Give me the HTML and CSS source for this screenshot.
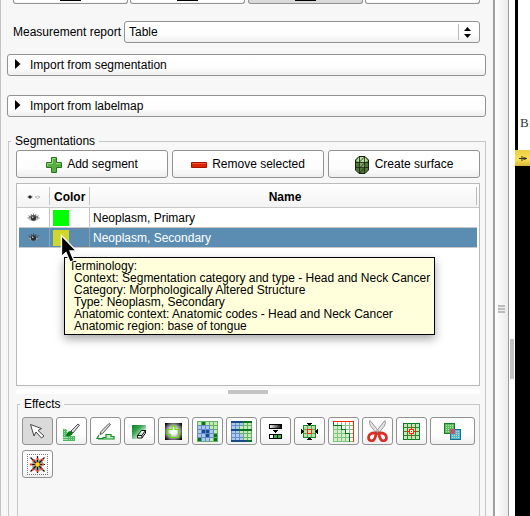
FILE: index.html
```html
<!DOCTYPE html>
<html lang="en">
<head>
<meta charset="utf-8">
<title>Segment editor</title>
<link rel="stylesheet" href="styles.css">
</head>
<body>
<div class="app">
  <main class="panel">
    <div class="modes">
      <div class="btn mode"><i></i></div><div class="btn mode"><i></i></div><div class="btn mode active"><i></i></div><div class="btn mode"></div>
    </div>
    <div class="report">
      <label>Measurement report</label>
      <div class="btn combo"><span>Table</span><i class="divider"></i>
        <svg width="7" height="11" viewBox="0 0 7 11"><path d="M0 4L3.5 0 7 4zM0 7h7L3.5 11z"/></svg>
      </div>
    </div>
    <div class="btn fold"><svg width="6" height="10"><path d="M0 0L5.5 5 0 10z"/></svg><span>Import from segmentation</span></div>
    <div class="btn fold second"><svg width="6" height="10"><path d="M0 0L5.5 5 0 10z"/></svg><span>Import from labelmap</span></div>

    <fieldset class="group">
      <legend>Segmentations</legend>
      <div class="actions">
        <button class="btn"><svg width="16" height="16" viewBox="0 0 16 16"><path d="M5.5.5h5v5h5v5h-5v5h-5v-5h-5v-5h5z" fill="#59ad42" stroke="#28751f"/><path d="M6.5 6V1.5h3M1.500 9V6.500h5M10 6.500h4.500" fill="none" stroke="#98d982"/></svg><span>Add segment</span></button>
        <button class="btn"><svg width="16" height="16" viewBox="0 0 16 16"><path d="M.5 5.500h15v5H.5z" fill="#dc2506" stroke="#a51400"/><path d="M1 6.500h14" stroke="#f15436"/></svg><span>Remove selected</span></button>
        <button class="btn surface"><svg width="14" height="18" viewBox="0 0 14 18"><path d="M4 .5h6L13.500 4v10L10 17.500H4L.5 14V4z" fill="#527638"/><path d="M4 1h6l3 4-3 1H4L1 5z" fill="#b6dda1"/><path d="M4 6h6v6H4z" fill="#82a56a"/><path d="M4 .5h6L13.500 4v10L10 17.500H4L.5 14V4z" fill="none" stroke="#182312"/><path d="M4.500 1v16M9.500 1v16M1 6.500h12M1 11.500h12M4.500 6l5-5M4.500 12l5-5M4.500 17l5-5" fill="none" stroke="#182312" stroke-width=".8"/></svg><span>Create surface</span></button>
      </div>
      <div class="table">
        <div class="row head">
          <div><svg width="14" height="6" viewBox="0 0 14 6"><path d="M0 3Q3-.5 6 3 3 5.500 0 3" fill="#999"/><circle cx="3" cy="3" r="1.500" fill="#222"/><path d="M8 3q2.500-2 5 0Q10.500 6 8 3" fill="#fff" stroke="#bbb"/></svg></div>
          <div>Color</div><div>Name</div>
        </div>
        <div class="row">
          <div><svg width="13" height="10" viewBox="0 0 13 10"><path d="M.5 5Q6.500-.5 12.500 5 6.500 10.500.5 5z" fill="#ccc" stroke="#999" stroke-width=".7"/><circle cx="6.500" cy="5" r="2.700" fill="#333"/><path d="M1.500 2.500l2 1.500M4 1l.8 2M6.500.5V3M9 1l-.8 2M11.500 2.500l-2 1.500M2 5q4.500-4 9 0" fill="none" stroke="#555" stroke-width=".8"/><circle cx="5.700" cy="4.300" r=".8" fill="#ddd"/></svg></div>
          <div><i class="swatch green"></i></div><div>Neoplasm, Primary</div>
        </div>
        <div class="row selected">
          <div><svg width="13" height="10" viewBox="0 0 13 10"><path d="M.5 5Q6.500-.5 12.500 5 6.500 10.500.5 5z" fill="#a4b7c5" stroke="#637f91" stroke-width=".7"/><circle cx="6.500" cy="5" r="2.700" fill="#292d30"/><path d="M1.500 2.500l2 1.500M4 1l.8 2M6.500.5V3M9 1l-.8 2M11.500 2.500l-2 1.500M2 5q4.500-4 9 0" fill="none" stroke="#34434e" stroke-width=".8"/><circle cx="5.700" cy="4.300" r=".8" fill="#ddd"/></svg></div>
          <div><i class="swatch yellow"></i><i class="focus"></i></div><div>Neoplasm, Secondary</div>
        </div>
      </div>
      <div class="hsplit"><i></i></div>
      <fieldset class="group effects">
        <legend>Effects</legend>
        <div class="tools">
          <button class="btn active"><svg width="21" height="21" viewBox="0 0 21 21"><path d="M3.500 3.500l11 4-3.500 2 6 5.500-2.500 2-5.500-6-2 4z" fill="#fff" stroke="#444"/></svg></button>
          <button class="btn"><svg width="21" height="21" viewBox="0 0 21 21"><path d="M2 8h4v7h8v5H2z" fill="#48b85b"/><path d="M3.500 8v12M5.500 8v12M2 16.500h12M2 18.500h12" stroke="#a7dfae" stroke-dasharray="1 1"/><path d="M10 10l7-7 1.500 1-6.500 8z" fill="#ddd" stroke="#555"/><path d="M5 15q1-5 5-5l2 2q-2 4-7 3z" fill="#08751c"/></svg></button>
          <button class="btn"><svg width="21" height="21" viewBox="0 0 21 21"><path d="M5 13.500l1-3 8-8 1.500 1-8 9z" fill="#e4e4e4" stroke="#555"/><path d="M4 14l-2 3.500h6v-1h3v-3h5v2h3v2.500H3" fill="#c5ebca" stroke="#168b26" stroke-width="1.200"/></svg></button>
          <button class="btn"><svg width="21" height="21" viewBox="0 0 21 21"><defs><linearGradient id="wipe" x1="0" y1="0" x2="1" y2="1"><stop stop-color="#058720"/><stop offset=".35" stop-color="#37a252"/><stop offset=".8" stop-color="#fff"/></linearGradient></defs><path d="M3 4h14v14H3z" fill="url(#wipe)"/><path d="M8.500 14.500l4-5h4l-3.500 5zM8.500 14.500v2.500H13l3.500-5V9.500M13 14.500V17" fill="#fff" stroke="#111"/></svg></button>
          <button class="btn"><svg width="17" height="17" viewBox="0 0 17 17"><defs><radialGradient id="glow" r=".65"><stop offset=".25" stop-color="#fff"/><stop offset=".6" stop-color="#999"/><stop offset="1" stop-color="#000"/></radialGradient></defs><path d="M0 0h17v17H0z" fill="#222"/><path d="M0 0h17v17H0z" fill="url(#glow)"/><path d="M7 3.500l1.500-1 1.500 1v3h3.500v8h-8v-3h-3v-5H7z" fill="none" stroke="#61e000" stroke-width="1.200"/></svg></button>
          <button class="btn"><svg class="px" width="21" height="21" viewBox="0 0 21 21"><path d="M0 0h21v21H0z" fill="#c5e8b5"/><path d="M0 5h13v4h4v4h-1v4h-3v4H4v-4H0z" fill="#aec7ed"/><path d="M5 1h3v3H5zM17 13h3v3h-3zM17 17h3v3h-3zM1 17h3v3H1z" fill="#087020"/><path d="M9 9h3v3H9zM5 9h3v3H5zM9 13h3v3H9z" fill="#174b91"/><path d="M.5.5h20v20H.5zM4.500 0v21M8.500 0v21M12.500 0v21M16.500 0v21M0 4.500h21M0 8.500h21M0 12.500h21M0 16.500h21" fill="none" stroke="#62b462"/><path d="M.5 4.500h12v4h4v4M.5 4.500v12h4M.5 8.500h12M.5 12.500h16M4.500 4.500v16M8.500 4.500v16M12.500 4.500v16M4.500 16.500h12" fill="none" stroke="#648bcc"/></svg></button>
          <button class="btn"><svg class="px" width="21" height="21" viewBox="0 0 21 21"><path d="M0 0h21v21H0z" fill="#c9e9ba"/><path d="M0 0h12v4H8v9h4v8H0z" fill="#b1c9ef"/><path d="M.5 0v21M4.500 0v21M8.500 0v21M12.500 0v21M16.500 0v21M20.500 0v21M0 4.500h21M0 12.500h21M0 16.500h21" stroke="#65b568"/><path d="M.5 0v21M4.500 0v21M8.500 12v9M0 4.500h12M0 12.500h9M0 16.500h12" stroke="#668ecd"/><path d="M0 1h12M0 9h8M0 20h16" stroke="#174a87" stroke-width="2"/><path d="M12 1h9M8 9h13M16 20h5" stroke="#087420" stroke-width="2"/></svg></button>
          <button class="btn"><svg class="px" width="15" height="17" viewBox="0 0 15 17"><defs><linearGradient id="ramp"><stop stop-color="#fff"/><stop offset="1" stop-color="#000"/></linearGradient></defs><path d="M1.500 1.500h12v4h-12z" fill="url(#ramp)" stroke="#000"/><path d="M5 7h5v1H9v1H8v1H7V9H6V8H5z"/><path d="M1.500 11.500h12v4h-12z" fill="#fff" stroke="#000"/><path d="M6 12h3v3H6zM10 12h3v3h-3z" fill="#44ac49"/><path d="M5.500 11v5M9.500 11v5" stroke="#000"/></svg></button>
          <button class="btn"><svg class="px" width="17" height="17" viewBox="0 0 17 17"><path d="M2.500 2.500h12v12h-12z" fill="#b9e0a9" stroke="#188728"/><path d="M6.500 3v11M10.500 3v11M3 6.500h11M3 10.500h11" stroke="#58ac58"/><path d="M6.500 6.500h4v4h-4z" fill="#c8e6ba" stroke="#ff2600"/><path d="M6 0h5v1h-1v1H9v1H8V2H7V1H6zM6 17h5v-1h-1v-1H9v-1H8v1H7v1H6zM0 6v5h1v-1h1V9h1V8H2V7H1V6zM17 6v5h-1v-1h-1V9h-1V8h1V7h1V6z"/></svg></button>
          <button class="btn"><svg class="px" width="21" height="21" viewBox="0 0 21 21"><path d="M0 0h21v21H0z" fill="#fff"/><path d="M0 4h8v4h4v4h4v9H0z" fill="#d2edc8"/><path d="M.5.5v20h20M4.500 0v21M8.500 0v21M12.500 0v21M16.500 0v21M0 4.500h21M0 8.500h21M0 12.500h21M0 16.500h21" fill="none" stroke="#83c381"/><path d="M0 .5h20.500V21" fill="none" stroke="#ff2600"/><path d="M.5 1v3.500h8v4h4v4h4v8" fill="none" stroke="#087320"/></svg></button>
          <button class="btn"><svg width="23" height="25" viewBox="0 0 23 25"><path d="M4 1.500q-1.500 2.500 1 6l5.500 7 2.500-2zM19 1.500q1.500 2.500-1 6l-5.500 7-2.500-2z" fill="#e3e3e3" stroke="#999"/><path d="M10.500 14Q3 13.500 2.500 18.500c0 4 5 4.500 6.500.5zM12.500 14q7.500-.5 8 4.500c0 4-5 4.500-6.500.5z" fill="#fff" stroke="#d92f24" stroke-width="2.700"/><circle cx="11.500" cy="13.500" r="1" fill="#777"/></svg></button>
          <button class="btn"><svg class="px" width="17" height="17" viewBox="0 0 17 17"><path d="M.5.500h16v16H.5z" fill="#c9e6bb" stroke="#087a20"/><path d="M4.500 0v17M8.500 0v17M12.500 0v17M0 4.500h17M0 8.500h17M0 12.500h17" stroke="#23892f"/><path d="M3 8.500h11M8.500 3v11" stroke="#ff2600"/><path d="M6.500 6.500h4v4h-4z" fill="#fff" stroke="#ff2600"/><path d="M8 8h1v1H8z" fill="#ff2600"/></svg></button>
          <button class="btn wide"><svg class="px" width="17" height="17" viewBox="0 0 17 17"><path d="M6.500 6.500h10v10h-10z" fill="#5eb6cb" stroke="#167293"/><path d="M.5.500h10v10H.5z" fill="#5dbb58" stroke="#137d2b"/><path d="M6 6h5v5H6z" fill="#be5775"/><path d="M2 2.500h8M2 4.500h8M2 6.500h4M2 8.500h4M12 8.500h4M12 10.500h4M8 12.500h8M8 14.500h8" stroke="#b1e1c0" stroke-dasharray="1 1"/></svg></button>
          <button class="btn"><svg width="21" height="21" viewBox="0 0 21 21"><path class="px" d="M0 .5h21M0 20.500h21M.5 0v21M20.500 0v21" fill="none" stroke="#777" stroke-dasharray="1 1"/><path d="M6 5l4 1 5-1 1 4-1 4 1 3-5 1-5-1-1-5z" fill="#999"/><path d="M3 10.500h15M10.500 2v17M3.500 3.500l14 14M17.500 3.500l-14 14" stroke="#111" stroke-width="1.200"/><path d="M9.500 4h2v2h-2zM9.500 16h2v2h-2zM3 9.500h2v2H3zM15 9.500h2v2h-2zM5.500 5.500h2v2h-2zM14.500 4.500h2v2h-2zM5 14.500h2v2H5zM14 14h2v2h-2z" fill="#ff3519"/><circle cx="10.500" cy="10.500" r="2.200" fill="#ffe100" stroke="#dc8a00" stroke-width=".5"/></svg></button>
        </div>
      </fieldset>
    </fieldset>
  </main>
  <div class="vsplit"><i></i></div>
  <div class="gutter"><i></i></div>
  <aside class="viewer">
    <div class="note">B:</div>
    <div class="bar"><svg width="8" height="5" viewBox="0 0 8 5"><path d="M0 2.500h8M3 0v5M5 1v3M6 1v3" stroke="#333" fill="none"/></svg></div>
  </aside>
</div>
<div class="tooltip"><p>Terminology:</p>
<ul><li>Context: Segmentation category and type - Head and Neck Cancer</li><li>Category: Morphologically Altered Structure</li><li>Type: Neoplasm, Secondary</li><li>Anatomic context: Anatomic codes - Head and Neck Cancer</li><li>Anatomic region: base of tongue</li></ul></div>
<svg class="cursor" width="20" height="32" viewBox="0 0 20 32"><path d="M1.500 1.500v21l4.500-4 4 9.500 4-1.500-4-9.500h6.500z" fill="#000" stroke="#fff" stroke-width="1.300"/></svg>
</body>
</html>
```

FILE: styles.css
```css
* { box-sizing: border-box; }
body { margin: 0; width: 530px; height: 516px; overflow: hidden; position: relative; background: #f7f7f7; color: #000; font: 12px/14px "Liberation Sans", Arial, sans-serif; }
i { display: block; }
svg { display: block; flex: none; }
.px { shape-rendering: crispEdges; }
span, label, legend, li, p, .row div { white-space: nowrap; }
.app { display: flex; height: 516px; overflow: hidden; }
.panel { width: 493px; flex: none; border-left: 1px solid #c4c4c4; padding: 0 7px 0 6px; }
.btn { border: 1px solid #929292; border-radius: 3px; background: linear-gradient(#fff, #fdfdfd 65%, #efefef); display: flex; align-items: center; }
button { font: inherit; padding: 0; color: inherit; justify-content: center; }
.btn.active { background: #dadada; }
.modes { height: 4px; margin: 0 6px; display: grid; grid-template-columns: repeat(4, 115px); justify-content: space-between; }
.mode { border-top: 0; border-radius: 0 0 3px 3px; justify-content: center; align-items: flex-start; }
.mode i { width: 21px; height: 1px; background: #000; }
.report { display: flex; align-items: center; margin: 17px 6px 0; height: 22px; }
.report label { width: 111px; }
.combo { flex: 1; height: 22px; padding: 0 8px 0 4px; }
.combo span { flex: 1; }
.divider { width: 1px; height: 16px; background: #bbb; margin-right: 5px; }
.fold { height: 22px; margin-top: 11px; padding-left: 7px; }
.fold svg { margin-bottom: 2px; }
.fold span { margin-left: 9px; }
.fold.second { margin-top: 19px; }
.group { margin: 17px 0 0 1px; padding: 0 5px 0 7px; border: 1px solid #c6c6c6; min-width: 0; height: 400px; }
legend { padding: 0 4px; margin-left: -5px; height: 14px; }
.actions { display: grid; grid-template-columns: repeat(3, 152px); gap: 4px; margin-top: 2px; }
.actions .btn { height: 28px; gap: 5px; }
.actions svg { margin-top: 1px; }
.actions .surface { gap: 6px; }
.table { height: 203px; margin-top: 5px; border: 1px solid #b9b9b9; background: #fff; }
.row { display: grid; grid-template-columns: 30px 40px 1fr; height: 20px; margin: 0 2px; border-bottom: 1px solid #c8c8c8; }
.row > div { display: flex; align-items: center; padding-left: 3px; border-left: 1px solid #c6c6c6; }
.row > div:first-child { justify-content: center; padding: 0 2px 0 0; border-left: 0; }
.head { height: 24px; margin: 0; grid-template-columns: 32px 40px 1fr; background: linear-gradient(#fff, #f3f3f3); font-weight: bold; padding: 3px 2px 2px 0; }
.row.head > div { padding-left: 4px; padding-top: 2px; }
.head > div:last-child { justify-content: center; border-right: 1px solid #bbb; }
.selected { background: #5b8db3; color: #fff; }
.row.selected > div { border-color: #7fa6c3; }
.swatch { width: 16px; height: 16px; flex: none; }
.green { background: #0f0; }
.yellow { background: #d0d72b; }
.focus { width: 17px; height: 19px; margin-left: 3px; border: 1px dotted #857e86; }
.hsplit { height: 5px; margin-top: 3px; background: #fff; display: flex; justify-content: center; }
.hsplit i { width: 40px; height: 4px; margin-top: 1px; background: #c4c4c4; }
.effects { margin: 3px 0 0 1px; padding: 0 0 0 4px; height: 180px; }
.effects legend { margin-left: -2px; }
.tools { display: flex; flex-wrap: wrap; gap: 5px 3px; margin-top: 6px; }
.tools .btn { width: 31px; height: 28px; }
.tools svg { margin-top: 1px; }
.tools .wide { width: 45px; }
.vsplit { width: 16px; flex: none; border-left: 2px solid #a0a0a0; border-right: 1px solid #999; background: linear-gradient(90deg, #fff, #ebebeb); padding: 305px 0 0 3px; }
.vsplit i { width: 7px; height: 8px; background: repeating-linear-gradient(#bcbcbc 0 2px, #f2f2f2 2px 3px); }
.gutter { width: 6px; flex: none; background: #fff; padding: 339px 1px 0; }
.gutter i { height: 40px; background: #c2c2c2; }
.viewer { flex: 1; background: #000; overflow: hidden; }
.note { height: 150px; margin-left: 3px; padding: 115px 0 0 2px; background: #fff; color: #333; font: 13px/16px "Liberation Serif", serif; white-space: nowrap; }
.bar { height: 16px; padding: 6px 4px; background: linear-gradient(#edcf42, #f7df53 60%, #d6b737); }
.tooltip { position: absolute; left: 64px; top: 257px; width: 371px; height: 78px; border: 1px solid #000; background: #ffffdc; padding: 2px 0 0 4px; line-height: 12px; box-shadow: 0 4px 9px rgba(0,0,0,.35); }
.tooltip p, .tooltip ul { margin: 0; padding: 0; list-style: none; }
.tooltip ul { padding-left: 5px; }
.cursor { position: absolute; left: 60px; top: 234px; }
```
